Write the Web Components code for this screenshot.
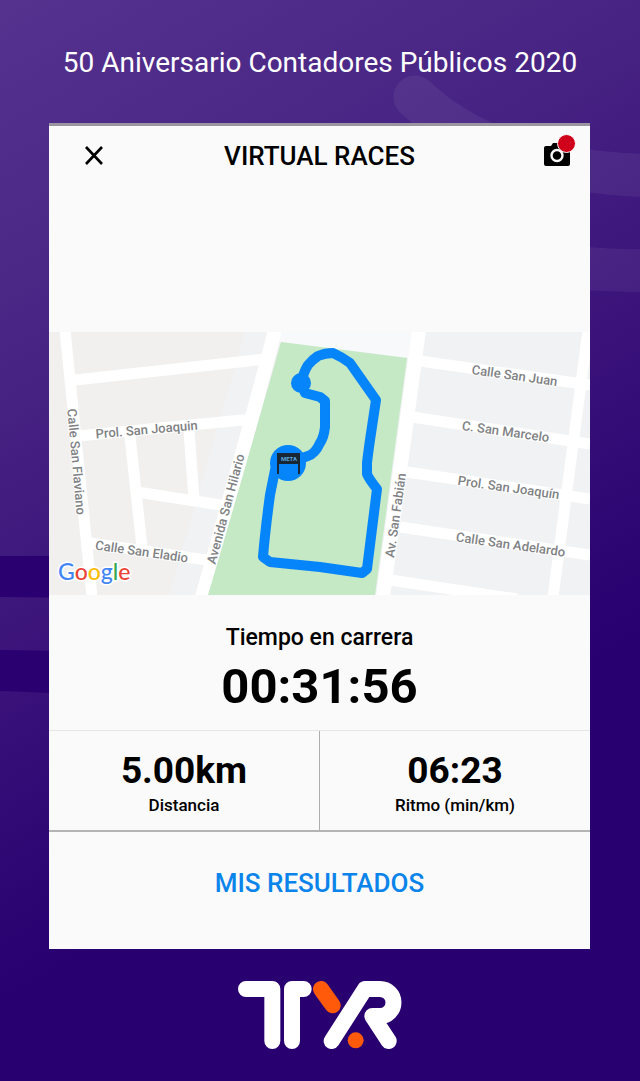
<!DOCTYPE html>
<html lang="es">
<head>
<meta charset="utf-8">
<meta name="viewport" content="width=device-width, initial-scale=1">
<title>Virtual Races</title>
<style>
  body {
    margin: 0;
    font-family: Roboto, "Liberation Sans", sans-serif;
    color: #000;
    background: #280070;
  }
</style>
</head>
<body>
<race-screen>
  <span slot="event">50 Aniversario Contadores Públicos 2020</span>
  <race-card>
    <race-bar slot="bar">VIRTUAL RACES</race-bar>
    <race-map slot="map"></race-map>
    <race-time slot="time" label="Tiempo en carrera">00:31:56</race-time>
    <race-stat slot="distance" label="Distancia">5.00km</race-stat>
    <race-stat slot="pace" label="Ritmo (min/km)">06:23</race-stat>
    <results-button slot="action">MIS RESULTADOS</results-button>
  </race-card>
  <tyr-logo slot="footer"></tyr-logo>
</race-screen>

<script>
/**
 * Defines a custom element with an open shadow root filled from markup.
 *
 * @param {string} name - The tag name.
 * @param {string} markup - Styles and markup of the shadow root.
 */
const defineElement = (name, markup) => {
  const template = document.createElement('template')
  template.innerHTML = markup

  customElements.define(name, class extends HTMLElement {
    constructor () {
      super()
      this.attachShadow({ mode: 'open' })
        .appendChild(template.content.cloneNode(true))
    }

    connectedCallback () {
      // Copy the label attribute into the shadow root, where there is one
      const label = this.shadowRoot.querySelector('#label')
      if (label && this.hasAttribute('label')) {
        label.textContent = this.getAttribute('label')
      }
    }
  })
}

/* Full screen with the purple backdrop */
defineElement('race-screen', `
  <style>
    :host {
      display: grid;
      min-height: 100vh;
      background: linear-gradient(150deg, #56328f 0%, #482584 25%, #3b137a 46%, #280070 69%);
    }
    .backdrop {
      grid-area: 1 / 1;
      width: 100%;
      height: 100%;
    }
    .content {
      grid-area: 1 / 1;
      z-index: 1;
      display: flex;
      flex-direction: column;
      min-width: 0;
    }
    h1 {
      margin: 0;
      padding: 45px 16px 42px;
      font-size: 28px;
      line-height: 36px;
      font-weight: 400;
      text-align: center;
      color: #fff;
    }
    main {
      margin: 0 50px 0 49px;
    }
    footer {
      display: flex;
      justify-content: center;
      padding: 31px 0;
    }
  </style>
  <svg class="backdrop" viewBox="0 0 640 1081" preserveAspectRatio="none" aria-hidden="true">
    <g fill="none" stroke="#fff" stroke-opacity=".06" stroke-width="43" stroke-linecap="round">
      <path d="M415 97C465 145 545 176 670 176"/>
      <path d="M440 240C500 262 560 271 670 271"/>
    </g>
    <path fill="#2a0070" d="M0 556H100V599Q50 597 0 597ZM0 650Q40 650 100 653V696Q40 692 0 691Z"/>
  </svg>
  <div class="content">
    <h1><slot name="event"></slot></h1>
    <main><slot></slot></main>
    <footer><slot name="footer"></slot></footer>
  </div>
`)

/* White card that stacks the parts of the race summary */
defineElement('race-card', `
  <style>
    :host {
      display: flex;
      flex-direction: column;
      border-top: 3px solid #9b959f;
      background: #fafafa;
    }
    .stats {
      display: flex;
      border-top: 1px solid #e6e6e6;
      border-bottom: 2px solid #b4b4b6;
    }
    .stat {
      flex: 1;
    }
    .stat + .stat {
      border-left: 1px solid #adadad;
    }
  </style>
  <slot name="bar"></slot>
  <slot name="map"></slot>
  <slot name="time"></slot>
  <div class="stats">
    <div class="stat"><slot name="distance"></slot></div>
    <div class="stat"><slot name="pace"></slot></div>
  </div>
  <slot name="action"></slot>
`)

/* Top bar: close, title, camera */
defineElement('race-bar', `
  <style>
    :host {
      display: grid;
      grid-template-columns: 1fr auto 1fr;
      align-items: center;
      height: 60px;
      padding: 0 16px 0 28px;
      margin-bottom: 146px;
    }
    h2 {
      margin: 0;
      padding-right: 12px;
      font-size: 26px;
      line-height: 32px;
      font-weight: 500;
    }
    button {
      position: relative;
      display: block;
      padding: 4px;
      border: 0;
      background: none;
      color: inherit;
    }
    .camera {
      justify-self: end;
    }
    svg {
      display: block;
    }
    .badge {
      position: absolute;
      top: -5px;
      right: -2px;
      width: 17px;
      height: 17px;
      border: 1px solid #fafafa;
      border-radius: 50%;
      background: #d0021b;
    }
  </style>
  <button type="button" aria-label="Cerrar">
    <svg width="26" height="26" viewBox="0 0 26 26" fill="none" stroke="#000" stroke-width="2.6"><path d="M5 4L21 21M21 4L5 21"/></svg>
  </button>
  <h2><slot></slot></h2>
  <button class="camera" type="button" aria-label="Cámara">
    <svg width="26" height="26" viewBox="0 0 26 26">
      <path d="M2 3H7L9 0H17L19 3H24Q26 3 26 5V21Q26 23 24 23H2Q0 23 0 21V5Q0 3 2 3Z"/>
      <circle cx="13" cy="12.500" r="5.500" fill="none" stroke="#fafafa" stroke-width="2.400"/>
    </svg>
    <span class="badge"></span>
  </button>
`)

/* Street map with the run drawn on it */
defineElement('race-map', `
  <style>
    :host {
      display: block;
    }
    svg {
      display: block;
      width: 100%;
      height: auto;
    }
    .roads {
      fill: none;
      stroke: #fff;
      stroke-width: 11;
    }
    .streets {
      font-size: 13px;
      font-weight: 500;
      fill: #808284;
      stroke: #fff;
      stroke-width: 2;
      stroke-opacity: .8;
      paint-order: stroke;
      text-anchor: middle;
    }
    .google {
      font-family: Lato, sans-serif;
      font-size: 23px;
      font-weight: 500;
      stroke: #fff;
      stroke-width: 3;
      paint-order: stroke;
    }
    .route {
      fill: none;
      stroke: #0684fa;
      stroke-width: 10;
      stroke-linejoin: round;
    }
  </style>
  <svg viewBox="0 0 541 263" role="img" aria-label="Mapa del recorrido">
    <rect width="541" height="263" fill="#f1f2f4"/>
    <path fill="#f1f0ef" d="M0 0H196L120 263H0Z"/>
    <path fill="#f8f9fa" d="M228 0H370L361 26L231 10Z"/>
    <g class="roads" stroke-linecap="butt">
      <path d="M26 48L217 27M29 104L204 87M81 104L93 215M140 98L145 168M88 160L178 174M41 211L164 229"/>
      <path d="M371 29L541 53M363 85L541 112M358 140L541 167M351 195L541 223M341 248L468 267"/>
      <path d="M16 -2L43 265M539 -2L504 265"/>
      <path stroke-width="14" d="M226 -2Q208 70 153 265M370 -2L334 265"/>
    </g>
    <path fill="#c5e8c5" d="M232 10L358 26L326 263H159Q185 175 232 10Z"/>
    <g class="route">
      <path d="M252 51Q255 39 259 33Q263 28 269 24Q276 21 284 21Q293 25 301 31L327 68L321 108Q319 122 318 131V142Q320 147 328 157L318 237L313 241L271 235L221 230L214 225Q216 200 221 163L226 138L239 131"/>
      <path d="M252 51L256 61L271 65L276 69V95Q275 105 271 111Q266 122 259 124L239 131"/>
    </g>
    <circle cx="252" cy="51" r="10" fill="#0684fa"/>
    <circle cx="239" cy="131" r="18" fill="#0684fa"/>
    <path fill="#172735" d="M228 121H251V142H249V132H230V142H228Z"/>
    <text x="240" y="129" font-size="6" font-weight="700" text-anchor="middle" fill="#5ba6dd">META</text>
    <g class="streets">
      <text transform="translate(465 48) rotate(8)">Calle San Juan</text>
      <text transform="translate(456 104) rotate(8)">C. San Marcelo</text>
      <text transform="translate(459 160) rotate(8)">Prol. San Joaquín</text>
      <text transform="translate(461 217) rotate(8)">Calle San Adelardo</text>
      <text transform="translate(351 184) rotate(-82)">Av. San Fabián</text>
      <text transform="translate(181 178) rotate(-75)">Avenida San Hilario</text>
      <text transform="translate(98 102) rotate(-5)">Prol. San Joaquin</text>
      <text transform="translate(92 224) rotate(8)">Calle San Eladio</text>
      <text transform="translate(23 130) rotate(85)">Calle San Flaviano</text>
    </g>
    <text class="google" x="9" y="248"><tspan fill="#4285f4">G</tspan><tspan fill="#ea4335">o</tspan><tspan fill="#fbbc05">o</tspan><tspan fill="#4285f4">g</tspan><tspan fill="#34a853">l</tspan><tspan fill="#ea4335">e</tspan></text>
  </svg>
`)

/* Elapsed time */
defineElement('race-time', `
  <style>
    :host {
      display: flex;
      flex-direction: column;
      align-items: center;
      padding: 29px 0 14px;
    }
    #label {
      font-size: 23px;
      line-height: 28px;
      font-weight: 500;
    }
    .value {
      margin-top: 6px;
      font-size: 49px;
      line-height: 58px;
      font-weight: 700;
    }
  </style>
  <span id="label"></span>
  <span class="value"><slot></slot></span>
`)

/* One figure with its caption */
defineElement('race-stat', `
  <style>
    :host {
      display: flex;
      flex-direction: column;
      align-items: center;
      padding: 18px 0 13px;
    }
    .value {
      font-size: 37px;
      line-height: 44px;
      font-weight: 700;
    }
    #label {
      font-size: 17px;
      line-height: 24px;
      font-weight: 500;
    }
  </style>
  <span class="value"><slot></slot></span>
  <span id="label"></span>
`)

defineElement('results-button', `
  <style>
    :host {
      display: flex;
      justify-content: center;
      padding: 31px 0 46px;
    }
    button {
      padding: 4px 12px;
      border: 0;
      background: none;
      font: 500 26px/32px Roboto, "Liberation Sans", sans-serif;
      color: #0a84ea;
    }
  </style>
  <button type="button"><slot></slot></button>
`)

defineElement('tyr-logo', `
  <style>
    :host,
    svg {
      display: block;
    }
  </style>
  <svg width="167" height="70" viewBox="20 30 501 210" role="img" aria-label="TYR">
    <g fill="none" stroke="#fff" stroke-width="48" stroke-linecap="round" stroke-linejoin="round">
      <path d="M47 57H126V213M220 57H185V213"/>
      <path d="M304 213L404 57H449A40 40 0 0 1 449 138H426L475 213"/>
      <path stroke="#ff5a0a" d="M272 57L307 106"/>
    </g>
    <circle cx="376" cy="211" r="24" fill="#ff5a0a"/>
  </svg>
`)
</script>
</body>
</html>
